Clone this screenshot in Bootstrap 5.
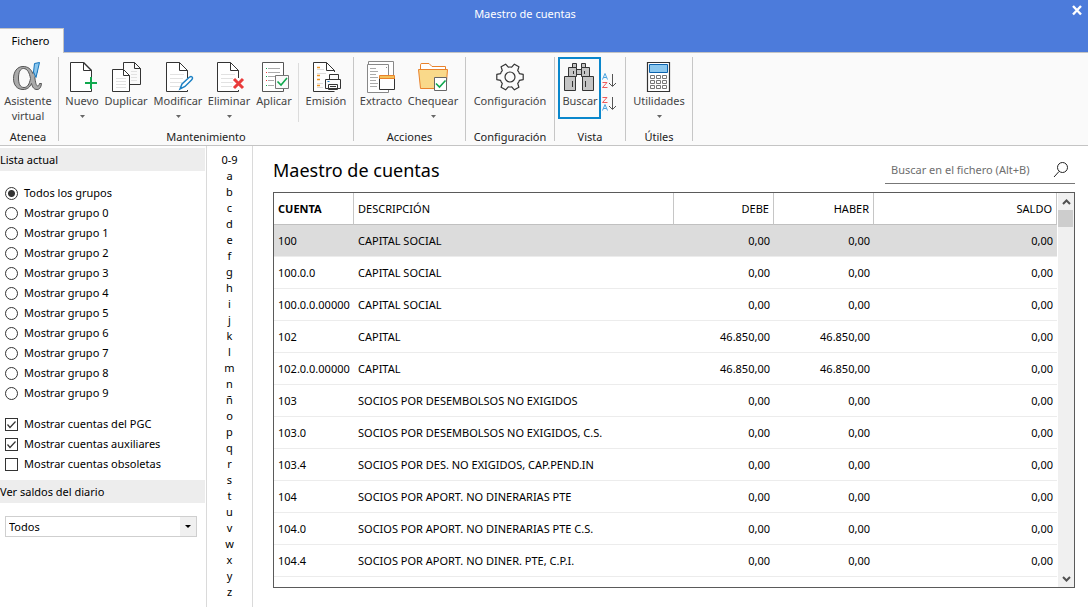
<!DOCTYPE html>
<html lang="es">
<head>
<meta charset="utf-8">
<meta name="viewport" content="width=device-width, initial-scale=1">
<title>Maestro de cuentas</title>
<link href="https://cdn.jsdelivr.net/npm/bootstrap@5.3.0/dist/css/bootstrap.min.css" rel="stylesheet">
<style>
body{font-family:"Noto Sans","Open Sans",sans-serif;font-size:11px;line-height:16px;color:#000;background:#fff}
button{font:inherit;color:inherit;background:none;border:0;padding:0}
.topbar{background:#4c7bdb}
.caption-row{height:28px;color:#fff}
.caption-text{text-align:center;padding-right:38px}
.close-x{position:absolute;right:4px;top:3px;width:14px;height:14px;line-height:0}
.tab-file{height:25px;width:64px;background:#fafafa;border:1px solid #c4c4c4;border-width:1px 1px 0 0;margin-bottom:-1px;padding-right:2px;position:relative;color:#000}
.ribbon{background:#fafafa;border-top:1px solid #c4c4c4;border-bottom:1px solid #c4c4c4;height:94px;padding-top:4px}
.rule{width:1px;background:#c6c6c6;margin-bottom:4px;flex:none}
.rule-short{width:1px;background:#dcdcdc;height:59px;margin-top:6px;flex:none}
.group-name{line-height:14px;text-align:center;color:#222}
.tool{display:flex;flex-direction:column;align-items:center;line-height:15px;color:#444;padding-top:4px;height:73px;white-space:nowrap;flex:none}
.tool svg{display:block;flex:none}
.tool .art{width:34px;height:33px;margin-bottom:-1px}
.tool .drop{width:7px;height:4px;margin-top:7px}
.tool-odd{padding-right:1px}
.w-group-1{width:58px;padding-right:2px}.w-group-2{width:294px}.w-group-3{width:111px}.w-group-4{width:88px}.w-group-5{width:70px}.w-group-6{width:66px}
.tool-on{border:2px solid #0a87cc;height:62px;width:43px;padding:2px 2px 0 3px}
.sorters{padding-top:16px;gap:6px}
.sidebar{width:207px;border-right:1px solid #dadada;padding:2px 1px 0 0;flex:none}
.side-title{background:#ededed;height:23px;line-height:23px;font-size:11px;font-weight:400;margin:0}
.opt{display:flex;align-items:center;height:20px;gap:6px;padding-left:5px}
.opt input{appearance:none;width:13px;height:13px;border:1px solid #333;margin:0;flex:none;background:#fff}
.opt input[type=radio]{border-radius:50%}
.opt input[type=radio]:checked{background:radial-gradient(circle,#333 0 3px,#fff 4px)}
.opt input[type=checkbox]:checked{background:url("data:image/svg+xml,%3Csvg xmlns='http://www.w3.org/2000/svg' viewBox='0 0 11 11'%3E%3Cpath d='M1.5 5.5l2.5 3 5.5-6' fill='none' stroke='%23333' stroke-width='1.2'/%3E%3C/svg%3E")}
.combo{position:relative;margin:13px 8px 0 5px}
.combo select{appearance:none;width:100%;height:21px;border:1px solid #cfcfcf;border-radius:0;padding:0 20px 0 3px;background:#fff;color:#000;display:block;line-height:18px}
.combo span{position:absolute;right:1px;top:1px;width:16px;height:19px;background:#f0f0f0;pointer-events:none;display:flex;align-items:center;justify-content:center}
.index-col{width:46px;border-right:1px solid #dadada;padding-top:6px;flex:none;min-height:461px}
.index-col a{color:#000;text-decoration:none;display:block;text-align:center}
.main-area{padding:10px 13px 19px 20px;min-width:0}
.main-area h1{font-size:18px;line-height:28px;font-weight:400;margin:0}
.finder{width:190px;height:28px;border-bottom:1px solid #777}
.finder input{border:0;outline:0;flex:1;min-width:0;padding:0 0 0 6px;background:none}
.finder input::placeholder{color:#6e6e6e;opacity:1}
.finder button{padding-right:5px}
.sheet{border:1px solid #5a5a5a;margin-top:8px}
.sheet table{width:100%;table-layout:fixed;border-collapse:separate;border-spacing:0}
.sheet th,.sheet td{height:32px;padding:0 4px;border-bottom:1px solid #ececec;white-space:nowrap;vertical-align:middle}
.sheet th{font-weight:400;border-bottom-color:#c0c0c0;border-right:1px solid #c6c6c6}
.sheet .num{text-align:right}
.sheet .picked td{background:#dcdcdc}
.col-code{width:80px}.col-desc{width:320px}.col-sum{width:100px}
.scroller{width:16px;background:#f0f0f0;margin-left:1px;flex:none}
.scroller button{height:17px;display:flex;align-items:center;justify-content:center}
.scroller .thumb{height:17px;background:#cdcdcd;margin-right:1px}
</style>
</head>
<body>
<header class="topbar">
  <div class="caption-row d-flex align-items-center position-relative">
    <div class="flex-fill caption-text">Maestro de cuentas</div>
    <button class="close-x" aria-label="Cerrar"><svg class="d-block" width="14" height="14" viewBox="0 0 14 14"><path d="M3 3l8 8.500M11 3l-8 8.500" stroke="#fff" stroke-width="2.400"/></svg></button>
  </div>
  <button class="tab-file">Fichero</button>
</header>

<nav class="ribbon d-flex">
  <div class="w-group-1">
    <button class="tool w-100"><svg class="art" viewBox="0 0 34 33">
      <path d="M12 5.500C6 5.500 2.500 11 2.500 17.500C2.500 24 6 28.500 12 28.500C16.500 28.500 19 26 20.500 22.500C21.500 26.500 23 28.500 26 28.500C28.500 28.500 30 26.500 30.500 22.500H28.500C28 24.500 27.500 25 26.800 25C25 25 24.500 21 23.800 16.500L26.500 10H23L21.800 12.500C20 8 17 5.500 12 5.500ZM12.500 7.500C16.500 7.500 18.500 12 19.500 17.500C18.500 23 16.500 26.500 13 26.500C9 26.500 7.500 22.500 7.500 17C7.500 11.500 9 7.500 12.500 7.500Z" fill="#aaa" stroke="#555" fill-rule="evenodd"/>
      <path d="M23.500 2.500L28.500 1.500L25 16.500L22.500 11Z" fill="#8bc7ee" stroke="#1675bc"/></svg>
      <span>Asistente</span><span>virtual</span></button>
    <div class="group-name">Atenea</div>
  </div>
  <div class="rule"></div>
  <div class="w-group-2">
    <div class="d-flex">
      <button class="tool" style="width:46px"><svg class="art" viewBox="0 0 34 33"><path d="M26.500 19V9.500L18.500 1.500H5.500V30.500H26.500V28M18.500 1.500V9.500H26.500" fill="#fff" stroke="#333"/><path d="M18.500 1.500L26.500 9.500" stroke="#333" stroke-width="1.500"/><path d="M20 22H32M26 16V28" stroke="#10a84e" stroke-width="2"/></svg><span>Nuevo</span><svg class="drop" viewBox="0 0 7 4"><path d="M1 0h5L3.500 3z" fill="#666"/></svg></button>
      <button class="tool tool-odd" style="width:43px"><svg class="art" viewBox="0 0 34 33"><path d="M14.500 8V1.500H25.500L31.500 7.500V23.500H21M25.500 1.500V7.500H31.500" fill="none" stroke="#333"/><path d="M22 10.500h6M22 13.500h6M22 16.500h6M22 19.500h6" stroke="#e2e2e2"/><path d="M20.500 14.500L14.500 8.500H3.500V30.500H20.500ZM14.500 8.500V14.500H20.500" fill="#fff" stroke="#333"/><path d="M7 17.500h10M7 20.500h10M7 23.500h10M7 26.500h10" stroke="#e2e2e2"/></svg><span>Duplicar</span></button>
      <button class="tool tool-odd" style="width:61px"><svg class="art" viewBox="0 0 34 33"><path d="M26.500 17V9.500L18.500 1.500H5.500V30.500H26.500V29M18.500 1.500V9.500H26.500" fill="#fff" stroke="#333"/><path d="M9 13.500h14M9 17.500h13M9 21.500h12M9 25.500h10" stroke="#e2e2e2"/><path d="M19 28l2-5L28 16.500q3-2 3.500.5q0 1-1 2L24 25.500Z" fill="#fff" stroke="#1b80c4" stroke-width="1.500"/></svg><span>Modificar</span><svg class="drop" viewBox="0 0 7 4"><path d="M1 0h5L3.500 3z" fill="#666"/></svg></button>
      <button class="tool tool-odd" style="width:41px"><svg class="art" viewBox="0 0 34 33"><path d="M26.500 17V9.500L18.500 1.500H5.500V30.500H26.500V29M18.500 1.500V9.500H26.500" fill="#fff" stroke="#333"/><path d="M9 13.500h14M9 17.500h12M9 21.500h12M9 25.500h11" stroke="#e2e2e2"/><path d="M22 18l9 9M31 18l-9 9" stroke="#e93b3b" stroke-width="3"/></svg><span>Eliminar</span><svg class="drop" viewBox="0 0 7 4"><path d="M1 0h5L3.500 3z" fill="#666"/></svg></button>
      <button class="tool" style="width:48px"><svg class="art" viewBox="0 0 34 33"><path d="M5.500 1.500H26.500V30.500H5.500Z" fill="#fff" stroke="#555"/><path d="M11 7.500h12M11 11.500h12M11 15.500h7M11 19.500h6M11 24.500h6" stroke="#aaa"/><path d="M9 7.500h1M9 15.500h1M9 24.500h1" stroke="#10a84e"/><path d="M9 11.500h1M9 19.500h1" stroke="#e93b3b"/><path d="M18.500 14.500h13v13h-13z" fill="#fafafa" stroke="#777"/><path d="M20.500 20.500l3.500 3.500 6-7" fill="none" stroke="#10a84e" stroke-width="1.600"/></svg><span>Aplicar</span></button>
      <div class="rule-short"></div>
      <button class="tool" style="width:54px"><svg class="art" viewBox="0 0 34 33"><path d="M25.500 11V9.500L17.500 1.500H4.500V30.500H25.500M17.500 1.500V9.500H25.500" fill="#fff" stroke="#333"/><path d="M8 6.500h3M8 14.500h3M8 18.500h3M8 24.500h3" stroke="#ee9728" stroke-width="1.500"/><path d="M8 8.500h7M8 12.500h9M8 22.500h6M8 26.500h6" stroke="#ddd"/><path d="M20.500 13.500h9v5h-9zM16.500 18.500h15v9h-15zM19.500 23.500h9v5h-9z" fill="#fafafa" stroke="#333"/><path d="M21 25.500h6" stroke="#333"/><path d="M18.500 20.500h2" stroke="#1b80c4"/></svg><span>Emisión</span></button>
    </div>
    <div class="group-name">Mantenimiento</div>
  </div>
  <div class="rule"></div>
  <div class="w-group-3">
    <div class="d-flex">
      <button class="tool" style="width:54px"><svg class="art" viewBox="0 0 34 33"><path d="M4.500.500H29.500V27.500H4.500Z" fill="#fff" stroke="#888"/><path d="M3.500 3.500H24.500V31.500H3.500Z" fill="#fff" stroke="#888"/><path d="M6 7.500h6M6 10.500h8M6 13.500h6M6 16.500h8M6 19.500h6M6 22.500h8M6 25.500h7" stroke="#aaa"/><path d="M22 6.500h1" stroke="#888"/><path d="M15.500 15.500h15v13h-15z" fill="#fff" stroke="#333"/><path d="M15.500 14.500h15v3h-15z" fill="#f4c15a" stroke="#e9822c"/></svg><span>Extracto</span></button>
      <button class="tool" style="width:50px"><svg class="art" viewBox="0 0 34 33"><path d="M4.500 9V3.500Q4.500 2.500 6 2.500H13L16 5.500H29.500V10" fill="#fff" stroke="#e9822c"/><path d="M2.500 8.500H31.500L30 27.500H4.500Z" fill="#f9d98a" stroke="#e9822c"/><path d="M18.500 16.500h12v13h-12z" fill="#fff" stroke="#666"/><path d="M20 22.500l3.500 3.500 6-6.500" fill="none" stroke="#10a84e" stroke-width="1.600"/></svg><span>Chequear</span><svg class="drop" viewBox="0 0 7 4"><path d="M1 0h5L3.500 3z" fill="#666"/></svg></button>
    </div>
    <div class="group-name">Acciones</div>
  </div>
  <div class="rule"></div>
  <div class="w-group-4">
    <button class="tool w-100"><svg class="art" viewBox="0 0 34 33"><g fill="none" stroke="#333" stroke-width="1.200"><circle cx="17" cy="16" r="5"/><path d="M26.400 12.600L30.200 13.400V18.600L26.400 19.400Q26 21 24.700 22.400L25.900 26.200L21.400 28.800L18.700 25.800Q17 26.200 15.300 25.800L12.600 28.800L8.100 26.200L9.300 22.400Q8 21 7.600 19.400L3.800 18.600V13.400L7.600 12.600Q8 11 9.300 9.600L8.100 5.800L12.600 3.200L15.300 6.200Q17 5.800 18.700 6.200L21.400 3.200L25.900 5.800L24.700 9.600Q26 11 26.400 12.600Z" stroke-linejoin="round"/></g></svg><span>Configuración</span></button>
    <div class="group-name">Configuración</div>
  </div>
  <div class="rule"></div>
  <div class="w-group-5">
    <div class="d-flex" style="height:73px;padding-left:3px">
      <button class="tool tool-on"><svg class="art" viewBox="0 0 34 33"><g fill="#c4c4c4" stroke="#333"><path d="M9.500 2.500h4v4h-4zM18.500 2.500h4v4h-4zM13.500 8.500h5v5h-5z"/><path d="M5.500 6.500h8v9h-8zM18.500 6.500h8v9h-8z"/><path d="M1.500 15.500h11v14h-11zM19.500 15.500h11v14h-11z"/></g><path d="M10.500 10v3M21.500 10v3M9.500 20v6M22.500 20v6" stroke="#333"/></svg><span>Buscar</span></button>
      <div class="d-flex flex-column sorters">
        <button aria-label="Orden ascendente"><svg class="d-block" width="16" height="17" viewBox="0 0 16 17"><path d="M1.500 6.500L4 .500L6.500 6.500M2.500 4.500H5.500" fill="none" stroke="#4aa3e0"/><path d="M1.500 9.500H6L1.500 14.500H6.500" fill="none" stroke="#ee5b5b"/><path d="M11.500 1V13M8 10l3.500 3.500L15 10" fill="none" stroke="#555"/></svg></button>
        <button aria-label="Orden descendente"><svg class="d-block" width="16" height="17" viewBox="0 0 16 17"><path d="M1.500 1.500H6L1.500 6.500H6.500" fill="none" stroke="#ee5b5b"/><path d="M1.500 14.500L4 8.500L6.500 14.500M2.500 12.500H5.500" fill="none" stroke="#4aa3e0"/><path d="M11.500 1V13M8 10l3.500 3.500L15 10" fill="none" stroke="#555"/></svg></button>
      </div>
    </div>
    <div class="group-name">Vista</div>
  </div>
  <div class="rule"></div>
  <div class="w-group-6">
    <button class="tool w-100"><svg class="art" viewBox="0 0 34 33"><path d="M5.500 1.500h22v29h-22z" fill="#fff" stroke="#333" stroke-width="1.200"/><path d="M7.500 3.500h18v8h-18z" fill="#8bc7ee" stroke="#0b63ae"/><g fill="#fff" stroke="#777"><path d="M8.500 14.500h4v3h-4zM14.500 14.500h4v3h-4zM20.500 14.500h4v3h-4zM8.500 19.500h4v3h-4zM14.500 19.500h4v3h-4zM20.500 19.500h4v3h-4zM8.500 24.500h4v3h-4zM14.500 24.500h4v3h-4zM20.500 24.500h4v3h-4z"/></g></svg><span>Utilidades</span><svg class="drop" viewBox="0 0 7 4"><path d="M1 0h5L3.500 3z" fill="#666"/></svg></button>
    <div class="group-name">Útiles</div>
  </div>
  <div class="rule"></div>
</nav>

<div class="d-flex">
  <aside class="sidebar">
    <h2 class="side-title">Lista actual</h2>
    <div style="padding:12px 0 11px" id="groups"></div>
    <div style="padding-bottom:6px">
      <label class="opt"><input type="checkbox" checked>Mostrar cuentas del PGC</label>
      <label class="opt"><input type="checkbox" checked>Mostrar cuentas auxiliares</label>
      <label class="opt"><input type="checkbox">Mostrar cuentas obsoletas</label>
    </div>
    <h2 class="side-title">Ver saldos del diario</h2>
    <div class="combo"><select aria-label="Ver saldos del diario"><option>Todos</option></select><span><svg width="6" height="3" viewBox="0 0 6 3"><path d="M0 0h6L3 3z"/></svg></span></div>
  </aside>
  <nav class="index-col" id="letters" aria-label="Índice"></nav>
  <main class="main-area flex-fill">
    <div class="d-flex justify-content-between">
      <h1>Maestro de cuentas</h1>
      <div class="finder d-flex align-items-center"><input type="text" aria-label="Buscar en el fichero" placeholder="Buscar en el fichero (Alt+B)"><button aria-label="Buscar"><svg class="d-block" width="18" height="18" viewBox="0 0 18 18"><circle cx="10.500" cy="6.500" r="5" fill="none" stroke="#222"/><path d="M7 10.500L2 16" stroke="#222"/></svg></button></div>
    </div>
    <div class="sheet d-flex">
      <div class="flex-fill" style="min-width:0;padding-bottom:10px">
        <table>
          <colgroup><col class="col-code"><col class="col-desc"><col class="col-sum"><col class="col-sum"><col></colgroup>
          <thead><tr><th class="fw-bold">CUENTA</th><th>DESCRIPCIÓN</th><th class="num">DEBE</th><th class="num">HABER</th><th class="num">SALDO</th></tr></thead>
          <tbody id="rows"></tbody>
        </table>
      </div>
      <div class="scroller d-flex flex-column">
        <button aria-label="Subir"><svg width="9" height="6" viewBox="0 0 9 6"><path d="M1 5l3.500-3.500L8 5" fill="none" stroke="#505050" stroke-width="2"/></svg></button>
        <div class="thumb"></div>
        <button class="mt-auto" aria-label="Bajar"><svg width="9" height="6" viewBox="0 0 9 6"><path d="M1 1l3.500 3.500L8 1" fill="none" stroke="#505050" stroke-width="2"/></svg></button>
      </div>
    </div>
  </main>
</div>
<script>
const groups = ['Todos los grupos', ...Array.from({length: 10}, (_, i) => 'Mostrar grupo ' + i)];
document.getElementById('groups').innerHTML = groups.map((g, i) =>
  `<label class="opt"><input type="radio" name="grupo"${i ? '' : ' checked'}>${g}</label>`).join('');
document.getElementById('letters').innerHTML = ['0-9', ...'abcdefghijklmnñopqrstuvwxyz'].map(l => `<a href="#">${l}</a>`).join('');
const rows = [
  ['100', 'CAPITAL SOCIAL', '0,00'],
  ['100.0.0', 'CAPITAL SOCIAL', '0,00'],
  ['100.0.0.00000', 'CAPITAL SOCIAL', '0,00'],
  ['102', 'CAPITAL', '46.850,00'],
  ['102.0.0.00000', 'CAPITAL', '46.850,00'],
  ['103', 'SOCIOS POR DESEMBOLSOS NO EXIGIDOS', '0,00'],
  ['103.0', 'SOCIOS POR DESEMBOLSOS NO EXIGIDOS, C.S.', '0,00'],
  ['103.4', 'SOCIOS POR DES. NO EXIGIDOS, CAP.PEND.IN', '0,00'],
  ['104', 'SOCIOS POR APORT. NO DINERARIAS PTE', '0,00'],
  ['104.0', 'SOCIOS POR APORT. NO DINERARIAS PTE C.S.', '0,00'],
  ['104.4', 'SOCIOS POR APORT. NO DINER. PTE, C.P.I.', '0,00']
];
document.getElementById('rows').innerHTML = rows.map(([c, d, v], i) =>
  `<tr${i ? '' : ' class="picked"'}><td>${c}</td><td>${d}</td><td class="num">${v}</td><td class="num">${v}</td><td class="num">0,00</td></tr>`).join('');
</script>
<script src="https://cdn.jsdelivr.net/npm/bootstrap@5.3.0/dist/js/bootstrap.bundle.min.js"></script>
</body>
</html>
